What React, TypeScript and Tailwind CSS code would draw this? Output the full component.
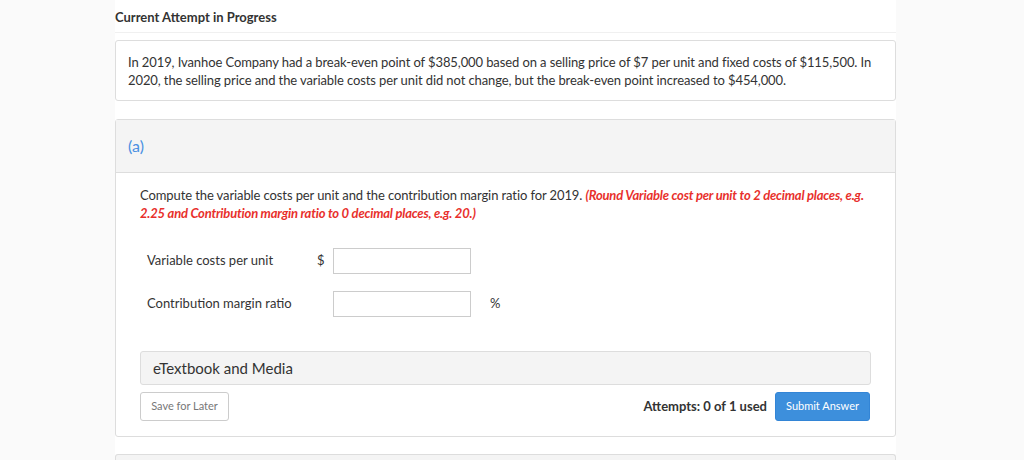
import React from "react";

export default function App() {
  return (
    <div className="min-h-screen bg-[#fafafa] font-['Lato','Noto_Sans',sans-serif] text-[#333]">
      <div className="ml-[115px] w-[781px] min-h-[460px] bg-white">
        <div className="h-[33px] border-b border-[#f0f0f0] pt-[8px] text-[13px] font-bold leading-[18px] text-[#333]">
          Current Attempt in Progress
        </div>
        <div className="mt-[7px] rounded-[3px] border border-[#ddd] pl-[12px] pr-[4px] pt-[12px] pb-[11px] text-[13px] leading-[18px] tracking-[-0.1px] text-[#333]">
          <span className="whitespace-nowrap">
            In 2019, Ivanhoe Company had a break-even point of $385,000 based on a selling price of $7 per unit and fixed costs of $115,500. In
          </span>
          <br />
          <span className="whitespace-nowrap">
            2020, the selling price and the variable costs per unit did not change, but the break-even point increased to $454,000.
          </span>
        </div>

        <div className="mt-[18px] rounded-[3px] border border-[#ddd]">
          <div className="flex h-[53px] items-center border-b border-[#ddd] bg-[#f4f4f4] px-[12px] text-[16px] text-[#4a90e2]">
            (a)
          </div>
          <div className="px-[24px] pt-[13px] pb-[15px]">
            <div className="text-[13px] leading-[18px] text-[#333]">
              <div className="whitespace-nowrap tracking-[-0.1px]">
                Compute the variable costs per unit and the contribution margin ratio for 2019.{" "}
                <span className="font-bold italic tracking-[-0.2px] text-[#e8302c]">
                  (Round Variable cost per unit to 2 decimal places, e.g.
                </span>
              </div>
              <div className="whitespace-nowrap font-bold italic tracking-[-0.2px] text-[#e8302c]">
                2.25 and Contribution margin ratio to 0 decimal places, e.g. 20.)
              </div>
            </div>

            <div className="mt-[26px] flex flex-col gap-[17px] pl-[7px]">
              <div className="flex h-[26px] items-center">
                <span className="w-[170px] text-[13px] text-[#333]">Variable costs per unit</span>
                <span className="w-[16px] text-[13px] text-[#333]">$</span>
                <div className="h-[26px] w-[138px] border border-[#ccc] bg-white" />
              </div>
              <div className="flex h-[26px] items-center">
                <span className="w-[186px] text-[13px] text-[#333]">Contribution margin ratio</span>
                <div className="h-[26px] w-[138px] border border-[#ccc] bg-white" />
                <span className="ml-[19px] text-[13px] text-[#333]">%</span>
              </div>
            </div>

            <div className="mt-[34px] flex h-[34px] items-center rounded-[3px] border border-[#ddd] bg-[#f4f4f4] px-[12px] text-[15px] text-[#333]">
              eTextbook and Media
            </div>

            <div className="mt-[7px] flex items-center">
              <button className="h-[29px] w-[89px] rounded-[3px] border border-[#ccc] bg-white text-[11px] text-[#777]">
                Save for Later
              </button>
              <div className="flex-1" />
              <span className="text-[13px] font-bold text-[#333]">Attempts: 0 of 1 used</span>
              <button className="ml-[8px] mr-[1px] h-[29px] w-[95px] rounded-[3px] border border-[#3385d6] bg-[#3d8fdc] text-[11px] text-white">
                Submit Answer
              </button>
            </div>
          </div>
        </div>

        <div className="mt-[17px] h-[20px] rounded-t-[3px] border border-b-0 border-[#ddd] bg-[#f4f4f4]" />
      </div>
    </div>
  );
}
